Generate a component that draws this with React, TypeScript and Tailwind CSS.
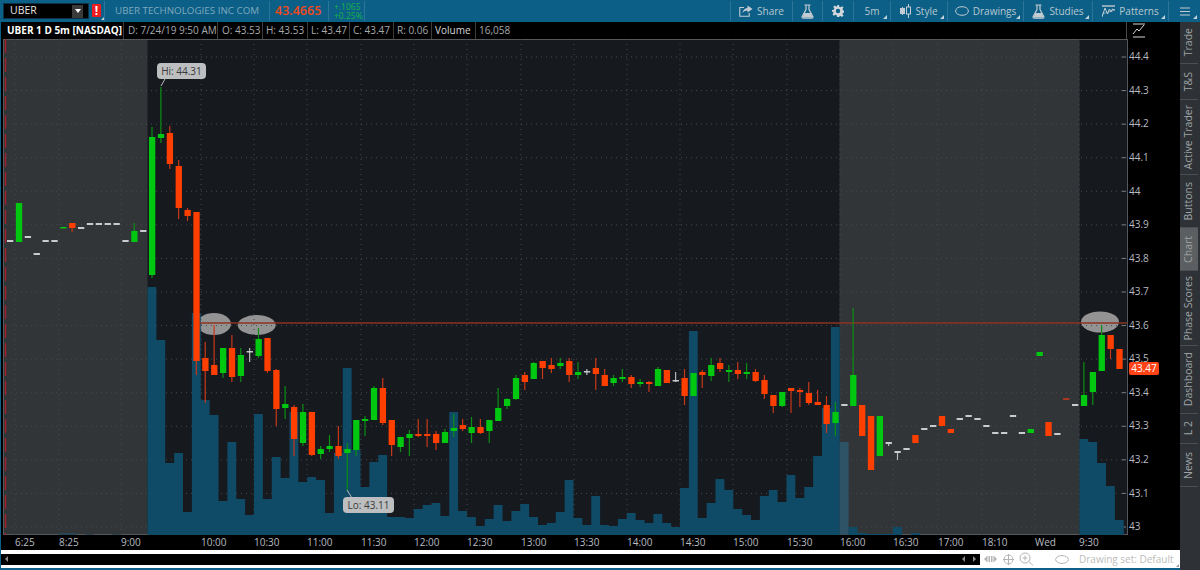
import React from 'react';

const FONT = "[font-family:'Open_Sans','Noto_Sans',sans-serif]";

// candle data in page pixels: wick top, wick bottom, body top, body bottom, kind
type Kind = 'g' | 'r' | 'w' | 'd';
type Candle = [number, number, number, number, Kind];

const dash = (y: number): Candle => [y, y, y - 1, y + 1, 'w'];

const candles: Candle[] = [
  dash(241), [203, 242, 203, 242, 'g'], dash(237), dash(254), dash(241), dash(241),
  [227, 228, 227, 228, 'g'], [223, 232, 223, 228, 'r'], dash(228), dash(224), dash(224), dash(224), dash(224),
  dash(241), [223, 242, 231, 242, 'g'], dash(231),
  [127, 278, 137, 275, 'g'], [87, 143, 134, 138, 'g'], [126, 169, 133, 164, 'r'], [160, 219, 166, 208, 'r'],
  [208, 221, 210, 216, 'r'], [212, 375, 212, 361, 'r'], [342, 403, 358, 371, 'r'], [325, 375, 365, 375, 'r'],
  [348, 378, 348, 373, 'g'], [335, 382, 348, 377, 'r'], [348, 382, 355, 376, 'g'], [348, 362, 351, 352, 'w'],
  [328, 358, 339, 356, 'g'], [338, 373, 338, 371, 'r'], [369, 426, 370, 409, 'r'], [386, 419, 404, 408, 'g'],
  [405, 456, 407, 439, 'r'], [404, 446, 412, 443, 'g'], [412, 456, 412, 455, 'r'], [446, 459, 449, 454, 'g'],
  [435, 452, 446, 449, 'g'], [426, 459, 446, 456, 'r'], [443, 490, 449, 453, 'g'], [420, 456, 420, 450, 'g'],
  [416, 436, 419, 421, 'g'], [386, 420, 388, 420, 'g'], [378, 425, 388, 423, 'r'], [420, 456, 420, 445, 'r'],
  [437, 452, 437, 447, 'g'], [430, 456, 434, 438, 'g'], [419, 437, 434, 436, 'r'], [419, 447, 434, 436, 'r'],
  [431, 450, 434, 443, 'r'], [429, 443, 432, 443, 'g'], [414, 437, 428, 431, 'g'], [419, 431, 425, 429, 'r'],
  [417, 443, 427, 433, 'g'], [419, 434, 427, 433, 'r'], [420, 443, 420, 431, 'g'], [388, 421, 408, 421, 'g'],
  [398, 409, 399, 406, 'g'], [375, 400, 378, 399, 'g'], [372, 390, 375, 382, 'r'], [362, 379, 363, 379, 'g'],
  [361, 379, 361, 368, 'r'], [358, 373, 365, 369, 'r'], [358, 369, 363, 366, 'g'], [358, 382, 361, 375, 'r'],
  [362, 379, 372, 375, 'g'], [369, 375, 371, 372, 'w'], [358, 390, 368, 374, 'r'], [369, 386, 375, 386, 'r'],
  [375, 386, 378, 383, 'g'], [369, 382, 377, 379, 'g'], [375, 388, 377, 384, 'r'], [379, 387, 382, 384, 'g'],
  [381, 392, 382, 384, 'r'], [367, 386, 369, 386, 'g'], [370, 383, 370, 383, 'r'], [372, 382, 380, 381, 'w'],
  [369, 405, 378, 396, 'r'], [373, 396, 373, 396, 'g'], [370, 388, 372, 375, 'r'], [358, 381, 365, 376, 'g'],
  [358, 372, 363, 369, 'r'], [365, 382, 370, 372, 'g'], [362, 379, 370, 374, 'r'], [363, 379, 372, 374, 'g'],
  [369, 382, 372, 381, 'r'], [375, 399, 380, 394, 'r'], [395, 413, 395, 406, 'r'], [392, 407, 392, 406, 'g'],
  [388, 413, 388, 391, 'r'], [388, 407, 390, 392, 'r'], [382, 405, 393, 403, 'r'], [390, 405, 402, 405, 'r'],
  [396, 433, 405, 424, 'r'], [402, 436, 412, 423, 'g'], dash(405), [308, 375, 375, 406, 'g'],
  [405, 436, 405, 436, 'r'], [416, 470, 416, 470, 'r'], [416, 456, 416, 456, 'g'], [442, 446, 442, 444, 'w'],
  [451, 460, 451, 453, 'w'], dash(449), [435, 443, 435, 443, 'r'], dash(429), dash(426), [416, 426, 416, 426, 'r'],
  [429, 433, 429, 433, 'r'], dash(419), dash(416), dash(419), dash(426), dash(433), dash(433), dash(416), dash(433),
  [429, 433, 429, 433, 'g'], [352, 356, 352, 356, 'g'], [422, 436, 422, 436, 'r'], dash(434),
  [398, 400, 398, 400, 'd'], dash(405), [362, 406, 395, 406, 'g'], [372, 405, 372, 392, 'g'],
  [325, 371, 335, 371, 'g'], [335, 359, 335, 349, 'r'], [349, 369, 349, 369, 'r'],
];

// top of each volume bar, from the 9:00 open on
const volume = [
  287, 340, 463, 453, 512, 313, 400, 415, 501, 442, 499, 515, 414, 499, 457, 478, 412, 482, 477, 480, 513, 453, 368,
  450, 487, 462, 455, 517, 517, 518, 509, 505, 503, 516, 412, 511, 517, 526, 519, 505, 521, 511, 504, 517, 525, 523,
  512, 480, 518, 525, 496, 525, 526, 519, 513, 520, 523, 514, 523, 527, 488, 331, 518, 503, 479, 490, 509, 515, 520,
  496, 490, 502, 475, 498, 487, 456, 408, 327, 442, 527, 533, 534, 534, 534, 527, 535, 533, 535, 535, 535, 535, 535,
  535, 535, 535, 535, 535, 535, 535, 535, 535, 535, 535, 535, 535, 439, 442, 463, 486, 520,
];

const ticks: [string, number][] = [
  ['6:25', 15], ['8:25', 59], ['9:00', 121], ['10:00', 201], ['10:30', 254], ['11:00', 307], ['11:30', 361],
  ['12:00', 414], ['12:30', 467], ['13:00', 521], ['13:30', 574], ['14:00', 627], ['14:30', 680], ['15:00', 733],
  ['15:30', 787], ['16:00', 840], ['16:30', 893], ['17:00', 938], ['18:10', 982], ['Wed', 1035], ['9:30', 1079],
];

const prices = ['44.4', '44.3', '44.2', '44.1', '44', '43.9', '43.8', '43.7', '43.6', '43.5', '43.4', '43.3', '43.2', '43.1', '43'];

const volumePath = (from: number, to: number) => {
  let d = `M${147.5 + 8.875 * from} 535`;
  for (let i = from; i < to; i++) {
    d += `V${volume[i]}H${147.5 + 8.875 * (i + 1)}`;
  }
  return d + 'V535Z';
};

function Corner() {
  return <span className="absolute right-[3px] bottom-[2px] w-0 h-0 border-l-[4px] border-l-transparent border-b-[4px] border-b-[#c4d2da]" />;
}

function Flask() {
  return (
    <svg width="13" height="15" viewBox="0 0 13 15" fill="none" stroke="#c2ccd2" strokeWidth="1.2">
      <path d="M3.5 1h6M5 1v4.5L1.2 12.6c-.4.8.1 1.6 1 1.6h8.6c.9 0 1.4-.8 1-1.6L8 5.500V1" />
      <path d="M3.400 9h6.200l2 4.500H1.400z" fill="#c2ccd2" stroke="none" />
    </svg>
  );
}

function ToolItem({ w, label, icon, corner = true }: { w: string; label?: string; icon?: React.ReactNode; corner?: boolean }) {
  return (
    <div className={`relative flex h-full items-center justify-center gap-[4px] border-l border-[#2c7498] ${w}`}>
      {icon}
      {label && <span className="text-[10px] text-[#b8c8d1]">{label}</span>}
      {corner && <Corner />}
    </div>
  );
}

function TopBar() {
  return (
    <div className="flex h-[22px] items-stretch bg-[#0c5f86] py-[1px]">
      <div className="ml-[3px] mt-[2px] mb-[2px] flex w-[86px] items-center justify-between border border-[#0a3348] bg-black pl-[6px] pr-[5px]">
        <span className="text-[10.5px] text-[#e4e4e4]">UBER</span>
        <div className="flex h-[13px] w-[11px] items-center justify-center bg-[#3a3a3a]">
          <span className="h-0 w-0 border-x-[3.500px] border-t-[4px] border-x-transparent border-t-white" />
        </div>
      </div>
      <div className="relative ml-[3px] w-[12px]">
        <div className="mt-[3px] flex h-[13px] w-[9px] items-center justify-center rounded-[1px] bg-[#ee1c1c] text-[12px] font-bold leading-none text-white">!</div>
        <span className="absolute right-0 bottom-[1px] h-0 w-0 border-b-[3px] border-l-[3px] border-b-[#c4d2da] border-l-transparent" />
      </div>
      <div className="flex w-[165px] items-center whitespace-nowrap border-l border-[#2c7498] pl-[10px] text-[9.8px] text-[#7fa9bf]">UBER TECHNOLOGIES INC COM</div>
      <div className="flex w-[59px] items-center border-l border-[#2c7498] pl-[5px] text-[12.5px] font-semibold text-[#f2481a]">43.4665</div>
      <div className="flex w-[36px] flex-col justify-center border-l border-[#2c7498] pl-[5px] text-[8.5px] leading-[9px] text-[#19b34a]">
        <span>+.1065</span>
        <span>+0.25%</span>
      </div>
      <div className="border-l border-[#2c7498]" />
      <div className="ml-auto flex items-stretch">
        <ToolItem
          w="w-[62px]"
          label="Share"
          corner={false}
          icon={
            <svg width="14" height="12" viewBox="0 0 14 12" fill="none" stroke="#c2ccd2" strokeWidth="1.1">
              <path d="M5 2.500H.8v8.800h9.400V8" />
              <path d="M8.500.5 13.500 4 8.500 7.500V5.600C6 5.600 4.500 6.500 3.500 8.500c.2-3 2-5.300 5-5.500z" fill="#c2ccd2" stroke="none" />
            </svg>
          }
        />
        <ToolItem w="w-[30px]" corner={false} icon={<Flask />} />
        <ToolItem
          w="w-[31px]"
          corner={false}
          icon={
            <svg width="12" height="12" viewBox="0 0 12 12" fill="#d0d6da">
              <path d="M5 0h2l.3 1.800 1.300.5L10.100 1.200l1.400 1.400-1 1.500.5 1.300 1.800.3v1.800l-1.800.3-.5 1.300 1 1.500-1.400 1.400-1.500-1-1.300.5L7 12H5l-.3-1.800-1.300-.5-1.500 1-1.400-1.400 1-1.500-.5-1.300L0 6.900V5.100l1.800-.3.5-1.300-1-1.500 1.400-1.400 1.500 1 1.300-.5zM6 3.800a2.200 2.200 0 1 0 0 4.400 2.200 2.200 0 0 0 0-4.400z" />
            </svg>
          }
        />
        <ToolItem w="w-[37px]" label="5m" />
        <ToolItem
          w="w-[57px]"
          label="Style"
          icon={
            <svg width="11" height="14" viewBox="0 0 11 14" fill="none" stroke="#c2ccd2" strokeWidth="1">
              <path d="M2.500 3v8M8.500 0v14" />
              <rect x="0.500" y="4.500" width="4" height="5" fill="#c2ccd2" />
              <rect x="6.500" y="3" width="4" height="7" fill="#0c5f86" />
            </svg>
          }
        />
        <ToolItem
          w="w-[76px]"
          label="Drawings"
          icon={
            <svg width="14" height="10" viewBox="0 0 14 10" fill="none" stroke="#c2ccd2" strokeWidth="1">
              <ellipse cx="7" cy="5" rx="6.400" ry="4.300" />
            </svg>
          }
        />
        <ToolItem w="w-[69px]" label="Studies" icon={<Flask />} />
        <ToolItem
          w="w-[76px]"
          label="Patterns"
          icon={
            <svg width="13" height="13" viewBox="0 0 13 13" fill="none" stroke="#c2ccd2" strokeWidth="1">
              <path d="M0 1h13" strokeWidth="1.400" />
              <path d="M0 12 3 3l2.500 6 2-5 1.500 3 1.500-3 2.500 1" />
              <path d="M0 9l13-4" strokeWidth=".6" />
            </svg>
          }
        />
        <ToolItem
          w="w-[32px]"
          icon={
            <svg width="10" height="9" viewBox="0 0 10 9" stroke="#c2ccd2" strokeWidth="1">
              <path d="M0 1h10M0 4.500h10M0 8h10" />
            </svg>
          }
        />
      </div>
    </div>
  );
}

const headerCells = [
  { w: 'w-[116px]', text: 'UBER 1 D 5m [NASDAQ]', cls: 'font-bold text-white' },
  { w: 'w-[94px]', text: 'D: 7/24/19 9:50 AM', cls: 'text-[#a6a9ac] pl-[4px]' },
  { w: 'w-[45px]', text: 'O: 43.53', cls: 'text-[#a6a9ac] pl-[4px]' },
  { w: 'w-[45px]', text: 'H: 43.53', cls: 'text-[#a6a9ac] pl-[3px]' },
  { w: 'w-[42px]', text: 'L: 43.47', cls: 'text-[#a6a9ac] pl-[3px]' },
  { w: 'w-[44px]', text: 'C: 43.47', cls: 'text-[#a6a9ac] pl-[3px]' },
  { w: 'w-[38px]', text: 'R: 0.06', cls: 'text-[#a6a9ac] pl-[3px]' },
  { w: 'w-[44px]', text: 'Volume', cls: 'text-[#d4d6d8] pl-[3px]' },
  { w: 'w-[36px]', text: '16,058', cls: 'text-[#a6a9ac] pl-[3px]' },
];

function Header() {
  return (
    <div className="flex h-[17px] items-stretch bg-black pl-[6px]">
      {headerCells.map((c, i) => (
        <div key={c.text} className={`flex items-center whitespace-nowrap text-[10px] ${c.w} ${c.cls} ${i > 0 ? 'border-l border-[#3c3c3c]' : ''}`}>
          {c.text}
        </div>
      ))}
      <div className="ml-auto mr-[53px] w-[1px] bg-[#4a4a4a]" />
    </div>
  );
}

function Chart() {
  const x = (i: number) => 152 + 8.875 * i;
  return (
    <svg className="block h-[496px] w-[1124px]" viewBox="3 39 1124 496">
      <rect x="3" y="39" width="1124" height="496" fill="#16191e" />
      <rect x="3" y="39" width="144.500" height="496" fill="#323538" />
      <rect x="839.500" y="39" width="240" height="496" fill="#323538" />
      <path d="M3 39.500H1127M3 534.500H1127" stroke="#55595c" strokeWidth="1" />
      <ellipse cx="214" cy="324" rx="17" ry="11" fill="#939393" />
      <ellipse cx="256.700" cy="325" rx="19" ry="10" fill="#939393" />
      <ellipse cx="1100" cy="322" rx="19" ry="10.500" fill="#939393" />
      {prices.map((_, i) => {
        const y = 57 + 33.57 * i;
        return (
          <g key={i}>
            <path d={`M6 ${y}H1122`} stroke="#474b4f" strokeWidth="1" strokeDasharray="1 4" />
            <path d={`M1122 ${y}H1126`} stroke="#7c7f82" strokeWidth="1" />
          </g>
        );
      })}
      {ticks.map(([label, t]) => (
        <path key={label} d={`M${t} 39V535`} stroke="#44484c" strokeWidth="1" strokeDasharray="1 4" />
      ))}
      <path d="M5.500 39V535" stroke="#a3202a" strokeWidth="1.400" strokeDasharray="14 5" />
      <path d="M3.500 39V535" stroke="#55595c" strokeWidth="1" />
      <path d={volumePath(0, 78)} fill="#0f4a67" />
      <path d={volumePath(78, 79)} fill="#2f5366" />
      <path d={volumePath(79, volume.length)} fill="#0f4a67" />
      <rect x="58" y="533" width="19" height="2" fill="#2a4654" />
      <rect x="85" y="534" width="9" height="1" fill="#2a4654" />
      <rect x="112" y="534" width="9" height="1" fill="#2a4654" />
      <path d="M197 323H1127" stroke="#8a3320" strokeWidth="1.600" />
      {candles.map(([wt, wb, bt, bb, k], n) => {
        const cx = x(n - 16);
        const body = k === 'g' ? '#00c810' : k === 'r' ? '#ff3f00' : k === 'd' ? '#a8381f' : '#c9cbcd';
        const wick = k === 'g' ? '#0b8f14' : k === 'r' ? '#c6381a' : '#b6b8ba';
        return (
          <g key={n}>
            {wb > wt + 2 && <rect x={cx - 0.6} y={wt} width="1.200" height={wb - wt} fill={wick} />}
            <rect x={cx - 3} y={bt} width="6.300" height={Math.max(bb - bt, 1.500)} fill={body} />
          </g>
        );
      })}
      <path d="M161 86 165 79" stroke="#b9bbbd" strokeWidth="1" />
      <path d="M347 490 352 498" stroke="#b9bbbd" strokeWidth="1" />
    </svg>
  );
}

function Callout({ className, text }: { className: string; text: string }) {
  return (
    <div className={`absolute flex h-[16px] items-center justify-center rounded-[4px] bg-[#bcbec0] text-[10px] text-[#3a3a3a] ${className}`}>
      {text}
    </div>
  );
}

function PriceAxis() {
  return (
    <div className="relative h-[496px] w-[52px] overflow-hidden bg-black pt-[1px]">
      {prices.map((p) => (
        <div key={p} className="flex h-[33.57px] items-center pl-[1px] text-[10px] text-[#b8bcc0]">
          {p}
        </div>
      ))}
      <div className="absolute left-[1px] top-[323px] flex h-[13px] w-[30px] items-center justify-center rounded-[2px] bg-[#ff4316] text-[10px] text-white">
        43.47
      </div>
    </div>
  );
}

function TimeAxis() {
  return (
    <div className="flex h-[15px] items-center bg-black pl-[14px]">
      {ticks.map(([label, t], i) => {
        const next = i < ticks.length - 1 ? ticks[i + 1][1] : t + 40;
        return (
          <div key={label} className="text-[10px] text-[#b8bcc0]" style={{ width: next - t }}>
            {label}
          </div>
        );
      })}
    </div>
  );
}

function BottomBar() {
  return (
    <div className="relative flex h-[18px] items-center bg-white">
      <div className="flex h-[11px] w-[979px] items-center justify-between bg-black pl-[4px] pr-[4px]">
        <span className="h-0 w-0 border-y-[3px] border-r-[3px] border-y-transparent border-r-[#8a8a8a]" />
        <div className="flex gap-[8px]">
          <span className="h-0 w-0 border-y-[3px] border-r-[3px] border-y-transparent border-r-[#8a8a8a]" />
          <span className="h-0 w-0 border-y-[3px] border-l-[3px] border-y-transparent border-l-[#8a8a8a]" />
        </div>
      </div>
      <div className="ml-[4px] flex items-center">
        <svg width="13" height="8" viewBox="0 0 13 8" fill="#b4b4b4">
          <path d="M0 4l3.500-3.500v7zM13 4 9.500.5v7zM4.500 1h1.500v6H4.500zM7 1h1.500v6H7z" />
        </svg>
        <svg className="ml-[6px]" width="11" height="11" viewBox="0 0 11 11" fill="none" stroke="#b4b4b4">
          <circle cx="5.500" cy="5.500" r="4.500" />
          <path d="M5.500 0v11M0 5.500h11" />
        </svg>
        <svg className="ml-[5px]" width="15" height="14" viewBox="0 0 15 14" fill="none" stroke="#b4b4b4">
          <circle cx="6" cy="6" r="5" />
          <path d="M6 3.500v5M3.500 6h5M9.800 9.500 14 13.500" />
        </svg>
        <svg className="ml-[21px]" width="14" height="9" viewBox="0 0 14 9" fill="none" stroke="#b4b4b4">
          <ellipse cx="7" cy="4.500" rx="6.400" ry="3.900" />
        </svg>
        <span className="ml-[10px] whitespace-nowrap text-[10px] text-[#bdbdbd]">Drawing set: Default</span>
      </div>
      <span className="absolute right-[1px] bottom-[1px] h-0 w-0 border-b-[3px] border-l-[3px] border-b-[#9a9a9a] border-l-transparent" />
    </div>
  );
}

const tabs: [string, string, boolean][] = [
  ['Trade', 'h-[42px]', false],
  ['T&S', 'h-[36px]', false],
  ['Active Trader', 'h-[75px]', false],
  ['Buttons', 'h-[53px]', false],
  ['Chart', 'h-[43px]', true],
  ['Phase Scores', 'h-[75px]', false],
  ['Dashboard', 'h-[68px]', false],
  ['L 2', 'h-[30px]', false],
  ['News', 'h-[43px]', false],
];

function SideTabs() {
  return (
    <div className="flex w-[20px] flex-col bg-[#2e3236]">
      {tabs.map(([label, h, active]) => (
        <div
          key={label}
          className={`flex w-[18px] items-center justify-center border-b border-[#4a4e52] ${h} ${active ? 'bg-[#5c5f61]' : 'bg-[#2e3236]'}`}
        >
          <span className="rotate-180 text-[10.5px] text-[#9fa3a6] [writing-mode:vertical-rl]">{label}</span>
        </div>
      ))}
    </div>
  );
}

export default function App() {
  return (
    <div className={`flex h-[570px] w-[1200px] flex-col overflow-hidden bg-[#0c5f86] ${FONT}`}>
      <TopBar />
      <div className="flex h-[548px]">
        <div className="flex w-[1180px] flex-col pl-[1px] pb-[2px]">
          <div className="relative">
            <Header />
            <svg className="absolute left-[1131px] top-[1px]" width="14" height="15" viewBox="0 0 14 15" fill="none" stroke="#d6d6d6" strokeWidth="1">
              <path d="M1 1h12M1 14h12M1 11 5 6l2 2 5-6" />
            </svg>
          </div>
          <div className="flex">
            <div className="w-[2px] bg-black" />
            <div className="relative">
              <Chart />
              <Callout className="left-[154px] top-[24px] w-[49px]" text="Hi: 44.31" />
              <Callout className="left-[340px] top-[458px] w-[51px]" text="Lo: 43.11" />
            </div>
            <div className="w-[1px] bg-[#55585b]" />
            <PriceAxis />
          </div>
          <TimeAxis />
          <BottomBar />
        </div>
        <SideTabs />
      </div>
    </div>
  );
}
